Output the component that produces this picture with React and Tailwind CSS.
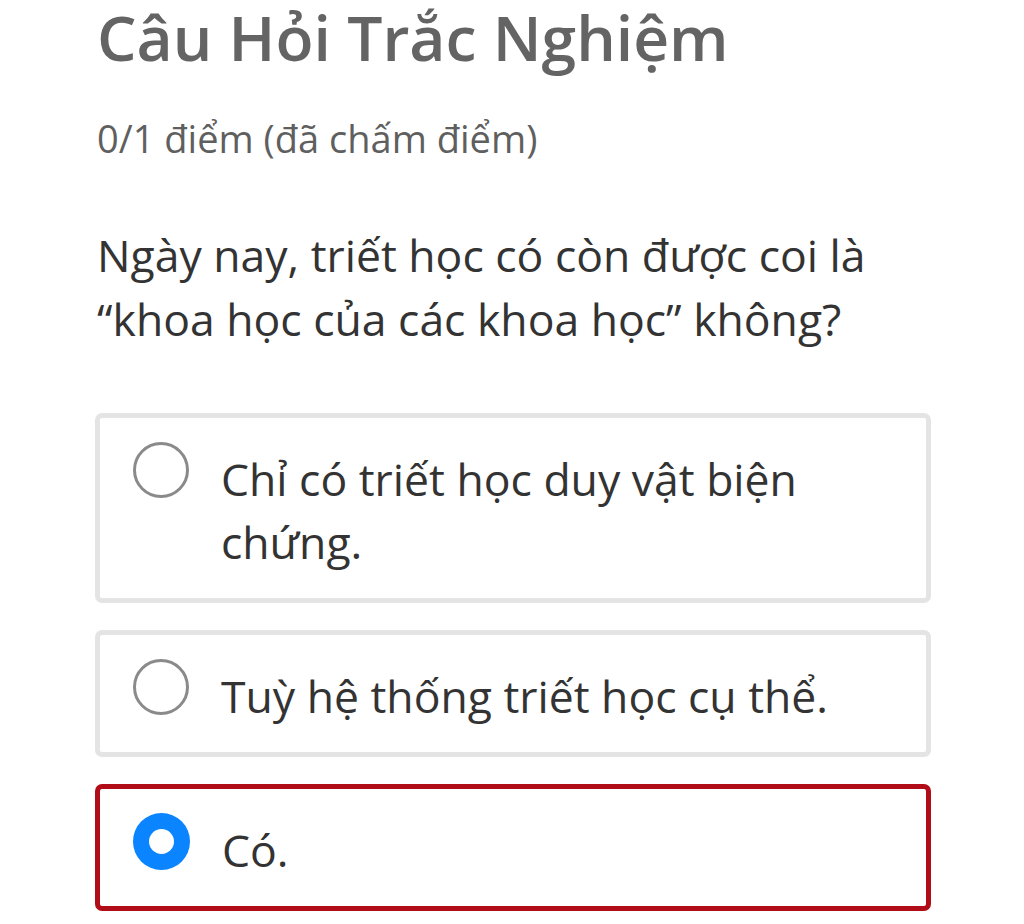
import React from "react";

function Radio({ checked }) {
  if (checked) {
    return (
      <div className="w-[57px] h-[57px] shrink-0 rounded-full bg-[#0a84ff] flex items-center justify-center">
        <div className="w-[25px] h-[25px] rounded-full bg-white" />
      </div>
    );
  }
  return <div className="w-[56px] h-[56px] shrink-0 rounded-full border-[3px] border-[#8a8a8a] bg-white" />;
}

function Option({ text, checked, wrong }) {
  return (
    <div
      className={
        "flex items-start gap-[32px] rounded-[7px] border-[5px] pl-[33px] pr-[30px] pt-[24px] pb-[25px] bg-white " +
        (wrong ? "border-[#b10d18]" : "border-[#e4e4e4]")
      }
    >
      <Radio checked={checked} />
      <div className="mt-[5px] text-[44.5px] leading-[63px] text-[#333333]">{text}</div>
    </div>
  );
}

export default function App() {
  return (
    <div
      className="min-h-[924px] bg-white"
      style={{ fontFamily: '"Open Sans", "Noto Sans", sans-serif' }}
    >
      <div className="ml-[95px] w-[836px]">
        <h1 className="pl-[2px] text-[62.4px] leading-[1.2] font-semibold text-[#646464]">
          Câu Hỏi Trắc Nghiệm
        </h1>
        <div className="pl-[2px] mt-[37px] text-[38px] leading-[1.4] text-[#5f5f5f]">
          0/1 điểm (đã chấm điểm)
        </div>
        <div className="pl-[2px] mt-[58px] text-[44.5px] leading-[64px] text-[#333333] pr-[40px]">
          Ngày nay, triết học có còn được coi là “khoa học của các khoa học” không?
        </div>
        <div className="mt-[62px] flex flex-col gap-[27px]">
          <Option text="Chỉ có triết học duy vật biện chứng." />
          <Option text="Tuỳ hệ thống triết học cụ thể." />
          <Option text="Có." checked wrong />
        </div>
      </div>
    </div>
  );
}
